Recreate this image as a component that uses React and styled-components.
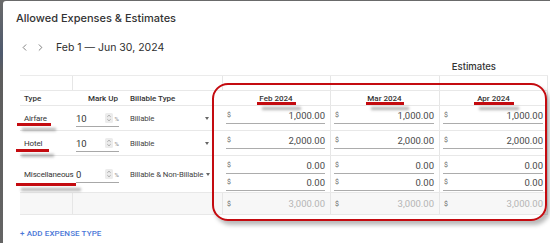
import React from "react";
import styled, { createGlobalStyle } from "styled-components";
import { ChevronLeft, ChevronRight } from "lucide-react";

const months = ["Feb 2024", "Mar 2024", "Apr 2024"];

const expenses = [
  { type: "Airfare", markUp: "10", billable: "Billable", values: [["1,000.00", "1,000.00", "1,000.00"]] },
  { type: "Hotel", markUp: "10", billable: "Billable", values: [["2,000.00", "2,000.00", "2,000.00"]] },
  {
    type: "Miscellaneous",
    markUp: "0",
    billable: "Billable & Non-Billable",
    values: [
      ["0.00", "0.00", "0.00"],
      ["0.00", "0.00", "0.00"],
    ],
  },
];

const totals = ["3,000.00", "3,000.00", "3,000.00"];

const marks = [
  { left: 14, top: 122, width: 34 },
  { left: 13, top: 148, width: 33 },
  { left: 13, top: 182, width: 60 },
  { left: 254, top: 101, width: 39 },
  { left: 363, top: 101, width: 38 },
  { left: 471, top: 101, width: 40 },
];

const Spinner = () => (
  <svg width="8" height="10" viewBox="0 0 8 10">
    <rect x="0" y="0" width="8" height="10" rx="1.5" fill="#ececec" />
    <path d="M2.3 3.8 L4 2.2 L5.7 3.8" fill="none" stroke="#9a9a9a" strokeWidth="0.8" />
    <path d="M2.3 6.2 L4 7.8 L5.7 6.2" fill="none" stroke="#9a9a9a" strokeWidth="0.8" />
  </svg>
);

const App = () => {
  return (
    <Screen>
      <GlobalStyle />
      <Dialog>
        <Title>Allowed Expenses &amp; Estimates</Title>
        <Nav>
          <NavButton>
            <ChevronLeft size={11} strokeWidth={1.6} />
          </NavButton>
          <NavButton>
            <ChevronRight size={11} strokeWidth={1.6} />
          </NavButton>
          <Period>Feb 1 — Jun 30, 2024</Period>
        </Nav>
        <GroupLabel>Estimates</GroupLabel>
        <Table>
          <Row $height={15}>
            <Cell />
            <Cell $sep />
            <Cell />
            <Cell $sep />
            <Cell $sep />
            <Cell $sep $end />
          </Row>
          <Row $height={15}>
            <HeadCell>Type</HeadCell>
            <HeadCell $align="flex-end" $pad="0 8px 0 3px">Mark Up</HeadCell>
            <HeadCell $pad="0 2px">Billable Type</HeadCell>
            {months.map((m, i) => (
              <HeadCell key={m} $align="center" $sep={i > 0} $end={i === 2}>
                {m}
              </HeadCell>
            ))}
          </Row>
          {expenses.map((e) => (
            <Row key={e.type} $height={e.values.length > 1 ? 37 : 25}>
              <Cell $center>
                <TypeText>{e.type}</TypeText>
              </Cell>
              <Cell $center>
                <MarkUp>
                  <MarkUpValue>{e.markUp}</MarkUpValue>
                  <Spinner />
                  <Percent>%</Percent>
                </MarkUp>
              </Cell>
              <Cell $center $pad="0 12px 0 2px">
                <Select>
                  <span>{e.billable}</span>
                  <Caret />
                </Select>
              </Cell>
              {[0, 1, 2].map((col) => (
                <Cell key={col} $sep={col > 0} $end={col === 2} $stack>
                  {e.values.map((line, k) => (
                    <Money key={k}>
                      <Dollar>$</Dollar>
                      <Amount>{line[col]}</Amount>
                    </Money>
                  ))}
                </Cell>
              ))}
            </Row>
          ))}
          <Row $height={22} $total>
            <Cell />
            <Cell $sep />
            <Cell />
            {totals.map((t, i) => (
              <Cell key={i} $sep $end={i === 2} $center>
                <TotalLine>
                  <Dollar>$</Dollar>
                  <Amount $muted>{t}</Amount>
                </TotalLine>
              </Cell>
            ))}
          </Row>
        </Table>
        <AddButton>+ Add expense type</AddButton>

        <Frame />
        {marks.map((m, i) => (
          <Mark key={i} style={{ left: m.left, top: m.top, width: m.width }} />
        ))}
      </Dialog>
    </Screen>
  );
};

export default App;

const GlobalStyle = createGlobalStyle`
  html, body {
    margin: 0;
    padding: 0;
    background: #5c5c5c;
  }
  * {
    box-sizing: border-box;
  }
`;

const Screen = styled.div`
  width: 550px;
  height: 243px;
  padding: 1px 0 0 3px;
  background: linear-gradient(180deg, #6a6a6a 0%, #4f5a6e 22%, #5d5d5d 30%, #646464 100%);
  overflow: hidden;
`;

const Dialog = styled.div`
  position: relative;
  width: 547px;
  height: 242px;
  padding-left: 13px;
  background: #fff;
  border-top-left-radius: 3px;
  font-family: Roboto, "Liberation Sans", sans-serif;
  color: #333;
  overflow: hidden;
`;

const Title = styled.div`
  padding-top: 8px;
  font-family: Inter, "Open Sans", sans-serif;
  font-size: 11px;
  line-height: 18px;
  font-weight: 500;
  color: #333;
`;

const Nav = styled.div`
  display: flex;
  align-items: center;
  height: 18px;
  margin-top: 11px;
  padding-left: 3px;
  gap: 5px;
`;

const NavButton = styled.span`
  display: flex;
  align-items: center;
  color: #555;
`;

const Period = styled.span`
  margin-left: 5px;
  font-family: Inter, "Open Sans", sans-serif;
  font-size: 10.5px;
  color: #2f2f2f;
`;

const GroupLabel = styled.div`
  margin-top: 5px;
  padding-right: 54px;
  text-align: right;
  font-family: Inter, "Open Sans", sans-serif;
  font-size: 9.5px;
  line-height: 12px;
  font-weight: 500;
  color: #333;
`;

const Table = styled.div`
  margin: 2px 0 0 4px;
  width: 528px;
  border-top: 1px solid #ebebeb;
`;

const Row = styled.div`
  display: grid;
  grid-template-columns: 52px 55px 95px 108px 109px 109px;
  height: ${({ $height }) => $height}px;
  border-bottom: 1px solid #e8e8e8;
  background: ${({ $total }) => ($total ? "#f7f7f7" : "transparent")};
`;

const Cell = styled.div`
  display: flex;
  flex-direction: ${({ $stack }) => ($stack ? "column" : "row")};
  align-items: ${({ $center }) => ($center ? "center" : "stretch")};
  padding: ${({ $stack, $pad }) => $pad || ($stack ? "1px 4px 0 3px" : "0 3px")};
  border-left: 1px solid ${({ $sep }) => ($sep ? "#e6e6e6" : "transparent")};
  border-right: 1px solid ${({ $end }) => ($end ? "#e6e6e6" : "transparent")};
  min-width: 0;
`;

const HeadCell = styled.div`
  display: flex;
  align-items: center;
  justify-content: ${({ $align }) => $align || "flex-start"};
  padding: ${({ $pad }) => $pad || "0 3px"};
  font-size: 8px;
  font-weight: 500;
  color: #333;
  white-space: nowrap;
  border-left: 1px solid ${({ $sep }) => ($sep ? "#e6e6e6" : "transparent")};
  border-right: 1px solid ${({ $end }) => ($end ? "#e6e6e6" : "transparent")};
`;

const TypeText = styled.span`
  font-size: 8px;
  letter-spacing: -0.15px;
  color: #333;
  white-space: nowrap;
`;

const MarkUp = styled.div`
  display: flex;
  align-items: center;
  width: 43px;
  height: 17px;
  margin-top: 1px;
  border-bottom: 1px solid #a8a8a8;
  gap: 1px;
`;

const MarkUpValue = styled.span`
  flex: 1;
  font-size: 9.5px;
  color: #333;
`;

const Percent = styled.span`
  font-size: 6px;
  color: #888;
  margin-left: 1px;
`;

const Select = styled.div`
  display: flex;
  align-items: center;
  justify-content: space-between;
  gap: 3px;
  width: 100%;
  font-size: 7.8px;
  letter-spacing: -0.1px;
  color: #444;
  white-space: nowrap;
`;

const Caret = styled.span`
  flex-shrink: 0;
  width: 0;
  height: 0;
  border-left: 2.5px solid transparent;
  border-right: 2.5px solid transparent;
  border-top: 3px solid #666;
`;

const Money = styled.div`
  display: flex;
  align-items: center;
  justify-content: space-between;
  height: 17px;
  border-bottom: 1px solid #acacac;
  padding-left: 1px;
`;

const TotalLine = styled.div`
  display: flex;
  align-items: center;
  justify-content: space-between;
  width: 100%;
  padding: 0 1px 0 1px;
`;

const Dollar = styled.span`
  font-size: 7px;
  color: #666;
`;

const Amount = styled.span`
  font-size: 9.5px;
  color: ${({ $muted }) => ($muted ? "#b5b5b5" : "#4a4a4a")};
`;

const AddButton = styled.div`
  margin: 14px 0 0 4px;
  font-size: 8px;
  font-weight: 500;
  text-transform: uppercase;
  letter-spacing: 0.1px;
  color: #4b78d8;
`;

const Frame = styled.div`
  position: absolute;
  left: 209px;
  top: 82px;
  width: 335px;
  height: 138px;
  border: 2px solid #c40b10;
  border-radius: 16px;
  box-shadow: 3px 4px 4px rgba(0, 0, 0, 0.28);
  pointer-events: none;
`;

const Mark = styled.div`
  position: absolute;
  height: 2.5px;
  background: #c40b10;
  box-shadow: 5px 5px 3px rgba(0, 0, 0, 0.3);
  pointer-events: none;
`;
